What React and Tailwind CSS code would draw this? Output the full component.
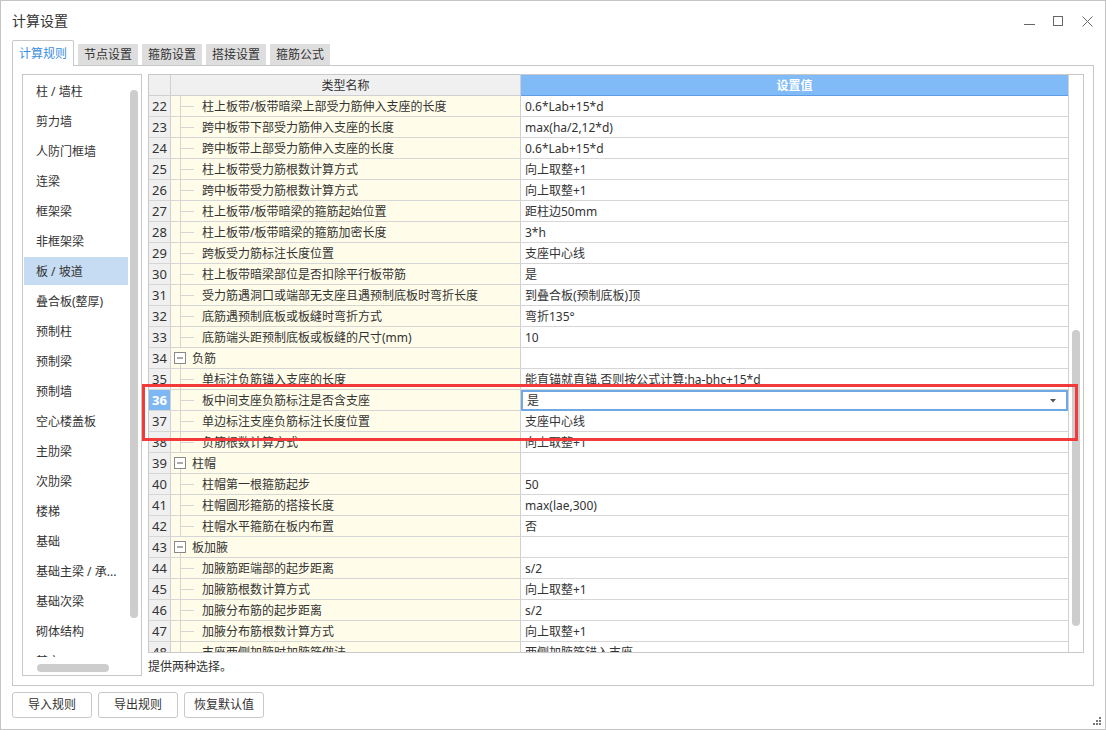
import { useState } from "react";

const sideItems = [
  "柱 / 墙柱",
  "剪力墙",
  "人防门框墙",
  "连梁",
  "框架梁",
  "非框架梁",
  "板 / 坡道",
  "叠合板(整厚)",
  "预制柱",
  "预制梁",
  "预制墙",
  "空心楼盖板",
  "主肋梁",
  "次肋梁",
  "楼梯",
  "基础",
  "基础主梁 / 承...",
  "基础次梁",
  "砌体结构",
  "其它",
];

const tabs = ["计算规则", "节点设置", "箍筋设置", "搭接设置", "箍筋公式"];

// [no, name, value, isGroup]
const rows = [
  [22, "柱上板带/板带暗梁上部受力筋伸入支座的长度", "0.6*Lab+15*d"],
  [23, "跨中板带下部受力筋伸入支座的长度", "max(ha/2,12*d)"],
  [24, "跨中板带上部受力筋伸入支座的长度", "0.6*Lab+15*d"],
  [25, "柱上板带受力筋根数计算方式", "向上取整+1"],
  [26, "跨中板带受力筋根数计算方式", "向上取整+1"],
  [27, "柱上板带/板带暗梁的箍筋起始位置", "距柱边50mm"],
  [28, "柱上板带/板带暗梁的箍筋加密长度", "3*h"],
  [29, "跨板受力筋标注长度位置", "支座中心线"],
  [30, "柱上板带暗梁部位是否扣除平行板带筋", "是"],
  [31, "受力筋遇洞口或端部无支座且遇预制底板时弯折长度", "到叠合板(预制底板)顶"],
  [32, "底筋遇预制底板或板缝时弯折方式", "弯折135°"],
  [33, "底筋端头距预制底板或板缝的尺寸(mm)", "10"],
  [34, "负筋", "", true],
  [35, "单标注负筋锚入支座的长度", "能直锚就直锚,否则按公式计算:ha-bhc+15*d"],
  [36, "板中间支座负筋标注是否含支座", "是"],
  [37, "单边标注支座负筋标注长度位置", "支座中心线"],
  [38, "负筋根数计算方式", "向上取整+1"],
  [39, "柱帽", "", true],
  [40, "柱帽第一根箍筋起步", "50"],
  [41, "柱帽圆形箍筋的搭接长度", "max(lae,300)"],
  [42, "柱帽水平箍筋在板内布置", "否"],
  [43, "板加腋", "", true],
  [44, "加腋筋距端部的起步距离", "s/2"],
  [45, "加腋筋根数计算方式", "向上取整+1"],
  [46, "加腋分布筋的起步距离", "s/2"],
  [47, "加腋分布筋根数计算方式", "向上取整+1"],
  [48, "支座两侧加腋时加腋筋做法", "两侧加腋筋锚入支座"],
];

const TreeLine = () => (
  <svg width="30" height="20" className="shrink-0">
    <line x1="9.5" y1="0" x2="9.5" y2="20" stroke="#d6d6d6" />
    <line x1="9.5" y1="10.5" x2="23" y2="10.5" stroke="#d6d6d6" />
  </svg>
);

const GroupBox = () => (
  <svg width="21" height="20" className="shrink-0">
    <rect x="3.5" y="4.5" width="11" height="11" fill="#fff" stroke="#8a8a8a" />
    <line x1="6" y1="10" x2="12" y2="10" stroke="#555" />
    <line x1="9.5" y1="16" x2="9.5" y2="20" stroke="#d6d6d6" />
  </svg>
);

const Row = ({ no, name, value, group, active }) => (
  <div className="flex h-[21px] border-b border-[#d6d6d6] shrink-0">
    <div
      className={
        active
          ? "w-[22px] shrink-0 border-r border-[#d0d0d0] bg-[#7db8f5] text-white font-bold text-[13px] flex items-center justify-center pt-[1px]"
          : "w-[22px] shrink-0 border-r border-[#d0d0d0] bg-[#f0f0f0] text-[#333] text-[13px] flex items-center justify-center pt-[1px]"
      }
    >
      {no}
    </div>
    <div className="w-[350px] shrink-0 border-r border-[#d0d0d0] bg-[#fffdea] flex items-center text-[12px] text-[#333] whitespace-nowrap overflow-hidden">
      {group ? <GroupBox /> : <TreeLine />}
      <span className={group ? "pt-[1px]" : "ml-[1px] pt-[1px]"}>{name}</span>
    </div>
    {active ? (
      <div className="flex-1 -mb-px border-2 border-[#6fa8e2] flex items-center pl-[4px] pr-[10px] text-[12px] text-[#333] bg-white">
        <span className="flex-1 pt-[1px]">{value}</span>
        <svg width="6" height="4">
          <path d="M0 0 L6 0 L3 3.5 Z" fill="#555" />
        </svg>
      </div>
    ) : (
      <div className="flex-1 flex items-center pl-[4px] pt-[1px] text-[12px] text-[#333] whitespace-nowrap overflow-hidden bg-white">
        {value}
      </div>
    )}
  </div>
);

export default function App() {
  const [tab, setTab] = useState(0);
  const [side, setSide] = useState(6);

  return (
    <div className="relative w-[1106px] h-[730px] bg-white border border-[#c4c4c4] flex flex-col font-['Noto_Sans','Noto_Sans_CJK_SC',sans-serif] text-[#333]">
      {/* title bar */}
      <div className="h-[39px] shrink-0 flex items-center pl-[11px] pr-[12px]">
        <span className="text-[14px] text-[#333]">计算设置</span>
        <div className="ml-auto flex items-center gap-[18px] pt-[1px]">
          <svg width="11" height="11">
            <line x1="0" y1="8.5" x2="11" y2="8.5" stroke="#666" />
          </svg>
          <svg width="11" height="11">
            <rect x="0.5" y="0.5" width="9" height="9" fill="none" stroke="#666" />
          </svg>
          <svg width="11" height="11">
            <path d="M0.5 0.5 L10.5 10.5 M10.5 0.5 L0.5 10.5" stroke="#666" />
          </svg>
        </div>
      </div>

      {/* tabs */}
      <div className="h-[25px] shrink-0 flex items-end gap-[4px] pl-[11px] relative z-10">
        {tabs.map((t, i) =>
          i === tab ? (
            <div
              key={t}
              onClick={() => setTab(i)}
              className="h-[26px] w-[62px] -mb-px bg-white border border-b-0 border-[#c8c8c8] rounded-t-[2px] flex items-center justify-center text-[12px] text-[#3b8ee0]"
            >
              {t}
            </div>
          ) : (
            <div
              key={t}
              onClick={() => setTab(i)}
              className="h-[21px] w-[60px] bg-[#dedede] flex items-center justify-center text-[12px] text-[#333]"
            >
              {t}
            </div>
          )
        )}
      </div>

      {/* panel */}
      <div className="ml-[11px] w-[1082px] h-[621px] shrink-0 border border-[#c8c8c8] flex pl-[9px] pt-[8px] pr-[9px] gap-[6px]">
        {/* left list */}
        <div className="w-[120px] h-[602px] shrink-0 border border-[#c8c8c8] flex flex-col">
          <div className="flex-1 flex overflow-hidden">
            <div className="w-[105px] pl-[1px] flex flex-col">
              {sideItems.map((s, i) => (
                <div
                  key={s}
                  onClick={() => setSide(i)}
                  className={
                    i === side
                      ? "h-[28px] mt-[2px] shrink-0 bg-[#c5dcf2] pl-[12px] pt-[2px] flex items-center text-[12px] text-[#333] whitespace-nowrap"
                      : "h-[28px] mt-[2px] shrink-0 pl-[12px] pt-[2px] flex items-center text-[12px] text-[#333] whitespace-nowrap"
                  }
                >
                  {s}
                </div>
              ))}
            </div>
            <div className="flex-1 pl-[2px]">
              <div className="mt-[15px] w-[8px] h-[528px] rounded-full bg-[#cdcdcd]" />
            </div>
          </div>
          <div className="h-[18px] shrink-0 bg-white pt-[7px] pl-[14px]">
            <div className="w-[72px] h-[8px] rounded-full bg-[#cdcdcd]" />
          </div>
        </div>

        {/* right: table + description */}
        <div className="flex-1 flex flex-col">
          <div className="h-[579px] shrink-0 border border-[#c8c8c8] flex overflow-hidden">
            <div className="flex-1 flex flex-col overflow-hidden">
              <div className="flex h-[21px] shrink-0 text-[12px]">
                <div className="w-[22px] shrink-0 bg-[#f0f0f0] border-r border-b border-[#d0d0d0]" />
                <div className="w-[350px] shrink-0 bg-[#f0f0f0] border-r border-b border-[#d0d0d0] flex items-center justify-center pt-[1px] text-[#333]">
                  类型名称
                </div>
                <div className="flex-1 bg-[#80bbf7] border-b border-[#5d9de6] flex items-center justify-center pt-[1px] text-white font-bold">
                  设置值
                </div>
              </div>
              {rows.map(([no, name, value, group]) => (
                <Row key={no} no={no} name={name} value={value} group={group} active={no === 36} />
              ))}
            </div>
            <div className="w-[15px] shrink-0 border-l border-[#d0d0d0] pl-[3px]">
              <div className="mt-[255px] w-[8px] h-[296px] rounded-full bg-[#cdcdcd]" />
            </div>
          </div>
          <div className="mt-[6px] text-[12px] leading-[16px] text-[#333]">提供两种选择。</div>
        </div>
      </div>

      {/* bottom buttons */}
      <div className="flex-1 flex items-start pt-[6px] pl-[11px] gap-[6px]">
        {["导入规则", "导出规则", "恢复默认值"].map((b) => (
          <button
            key={b}
            className="w-[80px] h-[26px] border border-[#c8c8c8] rounded-[3px] bg-white text-[12px] text-[#333] flex items-center justify-center"
          >
            {b}
          </button>
        ))}
        <svg width="9" height="9" className="ml-auto self-end mb-[3px] mr-[3px]">
          <rect x="6" y="0" width="2" height="2" fill="#777" />
          <rect x="3" y="3" width="2" height="2" fill="#777" />
          <rect x="6" y="3" width="2" height="2" fill="#777" />
          <rect x="0" y="6" width="2" height="2" fill="#777" />
          <rect x="3" y="6" width="2" height="2" fill="#777" />
          <rect x="6" y="6" width="2" height="2" fill="#777" />
        </svg>
      </div>

      {/* red highlight annotation */}
      <div className="absolute left-[141px] top-[383px] w-[936px] h-[57px] border-[3px] border-[#f23a3a] pointer-events-none" />
    </div>
  );
}
